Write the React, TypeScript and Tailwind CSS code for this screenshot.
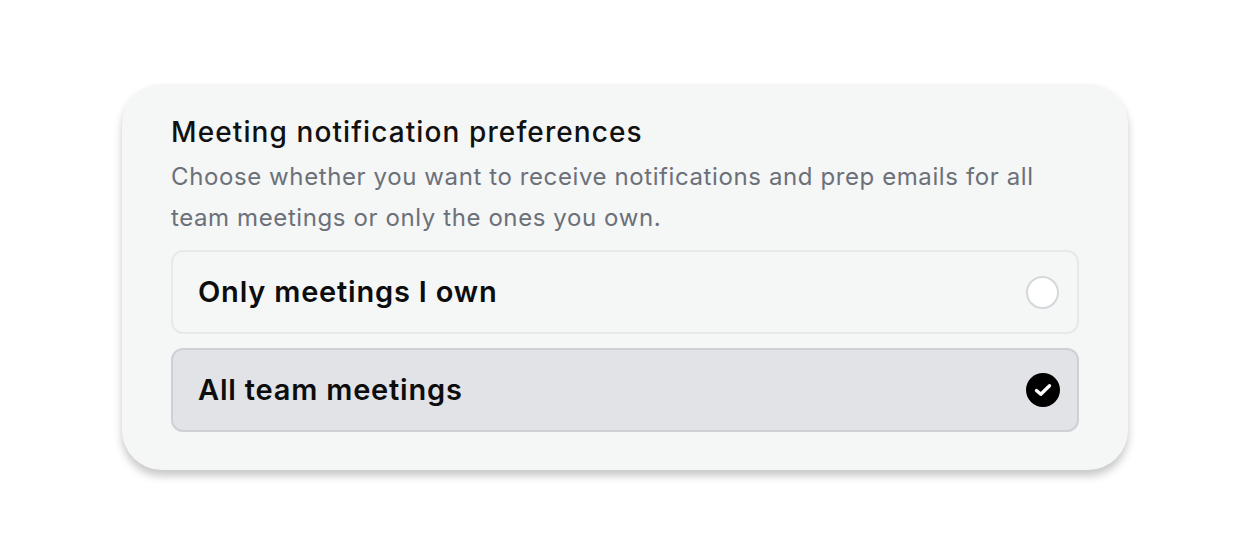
import React from "react";

export default function App() {
  return (
    <div className="w-[1250px] h-[556px] bg-white flex items-start justify-center pt-[84px]" style={{ fontFamily: "Inter, 'Noto Sans', sans-serif" }}>
      <div className="w-[1006px] h-[386px] bg-[#f5f6f6] rounded-[40px] shadow-[0_6px_9px_rgba(0,0,0,0.22)] pl-[49px] pr-[49px] pt-[29px] flex flex-col">
        <h1 className="text-[28px] leading-[38px] font-medium text-[#111111] tracking-[1.1px]">Meeting notification preferences</h1>
        <p className="mt-[5px] text-[24px] leading-[41px] text-[#6b7079] font-normal tracking-[0.6px]">
          Choose whether you want to receive notifications and prep emails for all team meetings or only the ones you own.
        </p>
        <div className="mt-[12px] flex flex-col gap-[14px]">
          <div className="h-[84px] rounded-[12px] border-2 border-[#e6e8ea] bg-[#f5f6f6] flex items-center justify-between pl-[25px] pr-[18px]">
            <span className="text-[29px] font-semibold text-[#0d0d0d] tracking-[0.8px]">Only meetings I own</span>
            <span className="w-[33px] h-[33px] rounded-full border-2 border-[#d4d7db] bg-white" />
          </div>
          <div className="h-[84px] rounded-[12px] border-2 border-[#cdd0d5] bg-[#e1e3e6] flex items-center justify-between pl-[25px] pr-[17px]">
            <span className="text-[29px] font-semibold text-[#0d0d0d] tracking-[0.8px]">All team meetings</span>
            <span className="w-[34px] h-[34px] rounded-full bg-black flex items-center justify-center">
              <svg width="18" height="14" viewBox="0 0 18 14" fill="none">
                <path d="M2.5 7.5 L6.8 11.2 L15.5 2.8" stroke="white" strokeWidth="3.4" strokeLinecap="round" strokeLinejoin="round" />
              </svg>
            </span>
          </div>
        </div>
      </div>
    </div>
  );
}
